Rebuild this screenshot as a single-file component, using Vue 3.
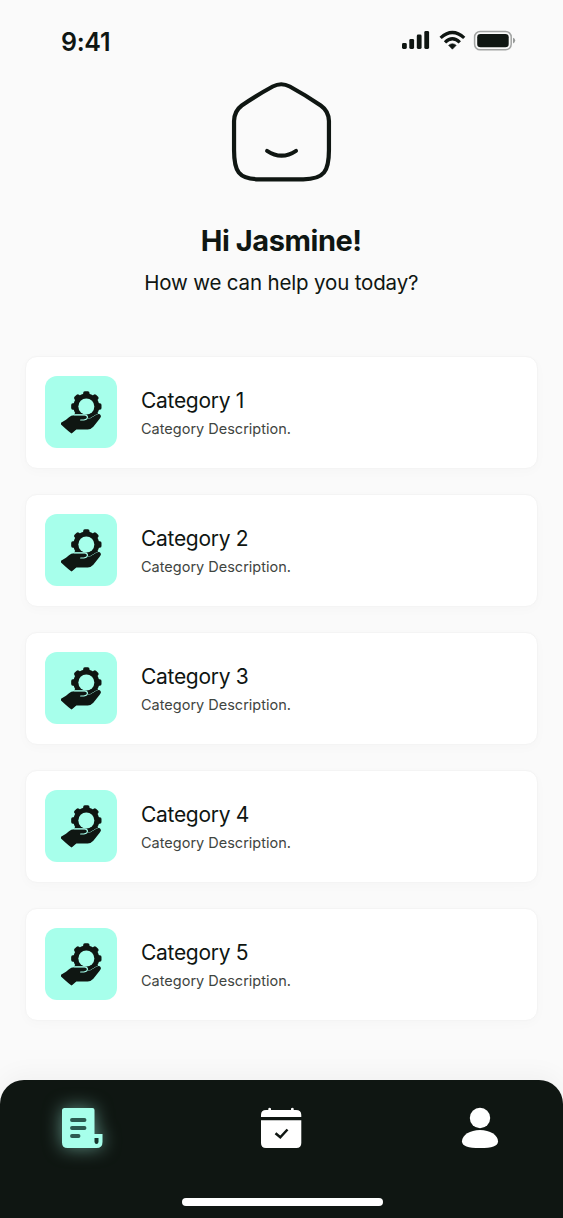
<script setup>
const categories = [1, 2, 3, 4, 5].map((n) => ({
  id: n,
  title: `Category ${n}`,
  description: 'Category Description.',
}))
const teeth = [0, 45, 90, 135, 180, 225, 270, 315]
</script>

<template>
  <div class="screen">
    <header class="status">
      <span class="time">9:41</span>
      <svg class="signals" width="116" height="24" viewBox="0 0 116 24">
        <g fill="#0f1612">
          <rect x="2" y="13" width="4.8" height="6" rx="1.4" />
          <rect x="9.3" y="9" width="4.8" height="10" rx="1.4" />
          <rect x="16.8" y="4.5" width="4.8" height="14.5" rx="1.4" />
          <rect x="24.3" y="1" width="4.8" height="18" rx="1.4" />
          <path d="M52.400 19.200 48.600 15.300Q52.400 12.200 56.200 15.300Z" stroke="#0f1612" stroke-width=".6" stroke-linejoin="round" />
          <rect x="77.2" y="4" width="31.5" height="13.3" rx="3.3" />
        </g>
        <g fill="none" stroke="#0f1612" stroke-width="3.3">
          <path d="M40.600 7.900Q52.400 -2.900 64.200 7.900" />
          <path d="M45 12.400Q52.400 5.300 59.800 12.400" />
        </g>
        <rect x="74.6" y="1.5" width="36.6" height="18.3" rx="5.6" fill="none" stroke="#0f1612" stroke-opacity=".38" stroke-width="1.5" />
        <path d="M113 7.8Q115.2 8.5 115.2 10.6T113 13.5Z" fill="#0f1612" fill-opacity=".42" />
      </svg>
    </header>

    <svg class="logo" width="120" height="120" viewBox="0.25 0 120 120" fill="none" stroke="#0f1612" stroke-linecap="round" stroke-linejoin="round">
      <path stroke-width="4.2" d="M52.500 16.500Q61 12 69.500 16.500Q86 25.500 100.500 35.500Q108.400 41 108.700 51V80C108.700 101 104 109.300 83 109.300H39C18 109.300 13.800 101 13.800 80V51Q14.100 41 21.500 35.500Q36 25.500 52.500 16.500Z" transform="translate(-.5 0)" />
      <path stroke-width="4" d="M46.300 80.800Q60.800 90.500 75.300 80.800" />
    </svg>

    <h1>Hi Jasmine!</h1>
    <p class="subtitle">How we can help you today?</p>

    <main class="list">
      <article v-for="item in categories" :key="item.id" class="card">
        <div class="tile">
          <svg width="72" height="72" viewBox="-15 -9.5 216 216">
            <g fill="#0f1612">
              <rect v-for="angle in teeth" :key="angle" x="99.500" y="33.500" width="19" height="18" rx="5" :transform="`rotate(${angle} 109 79)`" />
              <circle cx="109" cy="79" r="39" />
            </g>
            <circle cx="109" cy="79" r="24" fill="#a7ffeb" />
            <path class="hand" d="M33 128 48 119 57 111Q63 105 73 105H105Q113 106 113 114L119 116 139 104Q148 99 152 105 155 109 149 116L130 140Q123 148 113 148H79L65 160Q61 159 33 133Z" />
            <path d="M73 104H104Q113 105 112 113 110 120 92 119.500" fill="none" stroke="#a7ffeb" stroke-width="3.500" stroke-linecap="round" />
          </svg>
        </div>
        <div class="copy">
          <h2>{{ item.title }}</h2>
          <p>{{ item.description }}</p>
        </div>
      </article>
    </main>

    <nav class="tabbar">
      <div class="tabs">
        <svg class="active" width="42" height="42" viewBox="0 0 42 42">
          <path fill="#a7ffeb" d="M3.500 1H31.500Q33.500 1 33.500 3V27H41.500V35Q41.500 41 35.500 41H6.500Q1 41 1 35.500V3.500Q1 1 3.500 1Z" />
          <path d="M11 13H23.500M11 21H23.500M11 29H17.500" fill="none" stroke="#2b5a50" stroke-width="3.900" stroke-linecap="round" />
          <path d="M33.500 31H37.500V35Q37.200 37 35.500 37T33.500 35Z" fill="#17352d" />
        </svg>
        <svg width="42" height="42" viewBox="0 0 42 42">
          <path fill="#fff" d="M1 10V8Q1 3 6 3H8.300V1.500Q9.600 0 11 1.500V3H31V1.500Q32.400 0 33.700 1.500V3H36Q41.300 3 41.300 8V10ZM1 13.200H41.300V36Q41.300 41 36.300 41H6Q1 41 1 36Z" />
          <path d="M15.500 26.300 20.300 30.300 27.500 22.500" fill="none" stroke="#0f1612" stroke-width="2.500" />
        </svg>
        <svg width="42" height="42" viewBox="1 -0.200 42 42" fill="#fff">
          <circle cx="21" cy="10.800" r="10.200" />
          <path d="M21 22.800C31 22.800 39 28 39 34 39 39 33 40.800 21 40.800S3 39 3 34C3 28 11 22.800 21 22.800Z" />
        </svg>
      </div>
      <div class="home-indicator"></div>
    </nav>
  </div>
</template>

<style>
body {
  background: #c4c4c4;
}
</style>

<style scoped>
.screen {
  box-sizing: border-box;
  width: 562.5px;
  height: 1218px;
  overflow: hidden;
  display: flex;
  flex-direction: column;
  align-items: center;
  background: #fafafa;
  color: #0f1612;
  font-family: Inter, "Liberation Sans", sans-serif;
}
h1, h2, p {
  margin: 0;
  white-space: nowrap;
}
.status {
  box-sizing: border-box;
  width: 100%;
  height: 70px;
  padding: 25px 46.5px 0 61px;
  display: flex;
  justify-content: space-between;
}
.time {
  font-size: 25px;
  line-height: 34px;
  font-weight: 600;
  letter-spacing: -0.3px;
}
.signals {
  margin-top: 5px;
}
.logo {
  flex: none;
}
h1 {
  margin-top: 31px;
  font-size: 29px;
  line-height: 40px;
  font-weight: 700;
  letter-spacing: -0.45px;
}
.subtitle {
  margin-top: 7px;
  font-size: 20.5px;
  line-height: 30px;
  letter-spacing: -0.16px;
}
.list {
  width: 513px;
  margin-top: 57.5px;
  display: flex;
  flex-direction: column;
  gap: 25px;
}
.card {
  box-sizing: border-box;
  height: 113px;
  padding: 0 19.25px;
  display: flex;
  align-items: center;
  gap: 24px;
  background: #fff;
  border: 1px solid #f4f4f4;
  border-radius: 12px;
  box-shadow: 0 3px 12px rgba(0, 0, 0, 0.02);
}
.tile {
  width: 72px;
  height: 72px;
  border-radius: 12px;
  background: #a7ffeb;
}
.tile svg {
  display: block;
  transform: translateY(1px);
}
.hand {
  fill: #0f1612;
  stroke: #a7ffeb;
  stroke-width: 3;
  paint-order: stroke;
}
.copy {
  padding-top: 2px;
}
.copy h2 {
  font-size: 21px;
  line-height: 30px;
  font-weight: 400;
  letter-spacing: -0.3px;
}
.copy p {
  margin-top: 2px;
  font-size: 14.5px;
  line-height: 22px;
  color: #3f4541;
}
.tabbar {
  box-sizing: border-box;
  width: 100%;
  height: 138px;
  margin-top: auto;
  padding: 27px 61px 12px;
  display: flex;
  flex-direction: column;
  justify-content: space-between;
  align-items: center;
  border-radius: 24px 24px 0 0;
  background: #0f1612;
  box-shadow: 0 -6px 24px rgba(0, 0, 0, 0.04);
}
.tabs {
  width: 100%;
  display: flex;
  justify-content: space-between;
}
.active {
  overflow: visible;
  filter: drop-shadow(0 0 9px rgba(167, 255, 235, 0.5));
}
.home-indicator {
  width: 201px;
  height: 8px;
  margin-left: 2px;
  border-radius: 4px;
  background: #fff;
}
</style>
